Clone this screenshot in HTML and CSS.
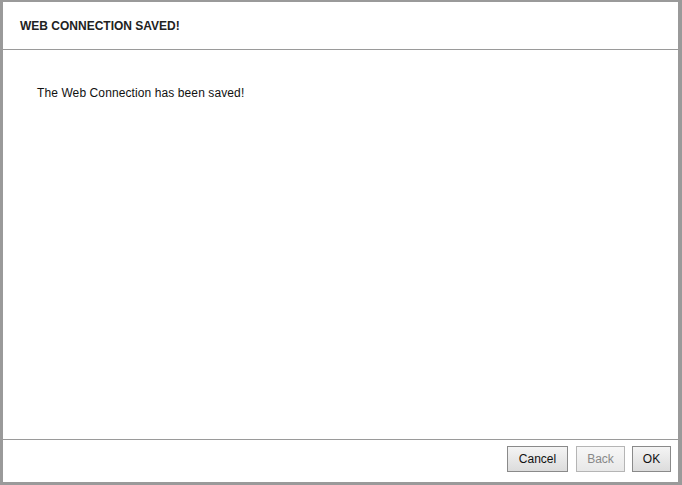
FILE: index.html
```html
<!DOCTYPE html>
<html>
<head>
<meta charset="utf-8">
<link rel="stylesheet" href="styles.css">
</head>
<body>
<div class="dialog">
  <div class="header">WEB CONNECTION SAVED!</div>
  <div class="content">
    <p class="message">The Web Connection has been saved!</p>
  </div>
  <div class="footer">
    <button class="btn btn-cancel">Cancel</button>
    <button class="btn btn-back disabled">Back</button>
    <button class="btn btn-ok">OK</button>
  </div>
</div>
</body>
</html>
```
FILE: styles.css
```css
html, body {
  margin: 0;
  padding: 0;
  height: 100%;
}
body {
  font-family: "Liberation Sans", Arial, sans-serif;
  background: #9a9a9a;
}
.dialog {
  box-sizing: border-box;
  height: 485px;
  width: 682px;
  border-style: solid;
  border-color: #9a9a9a;
  border-width: 2px 4px 3px 3px;
  background: #fff;
  display: flex;
  flex-direction: column;
}
.header {
  border-bottom: 1px solid #9a9a9a;
  box-sizing: border-box;
  height: 48px;
  padding: 17px 0 0 17px;
  font-size: 12px;
  font-weight: bold;
  color: #222;
}
.content {
  flex: 1;
  padding: 36px 0 0 34px;
}
.message {
  margin: 0;
  font-size: 12px;
  letter-spacing: 0.1px;
  color: #111;
}
.footer {
  border-top: 1px solid #9a9a9a;
  height: 43px;
  box-sizing: border-box;
  display: flex;
  justify-content: flex-end;
  align-items: flex-start;
  padding: 6px 7px 0 0;
  gap: 8px;
}
.btn {
  font-family: "Liberation Sans", Arial, sans-serif;
  font-size: 12px;
  height: 26px;
  padding: 0;
  border: 1px solid #8a8a8a;
  background: linear-gradient(#f4f4f4, #dcdcdc);
  color: #111;
  border-radius: 0;
}
.btn-cancel { width: 61px; }
.btn-back { width: 49px; margin-right: -1px; }
.btn-ok { width: 39px; }
.btn.disabled {
  color: #888;
  border-color: #b5b5b5;
  background: linear-gradient(#f7f7f7, #e8e8e8);
}
```
